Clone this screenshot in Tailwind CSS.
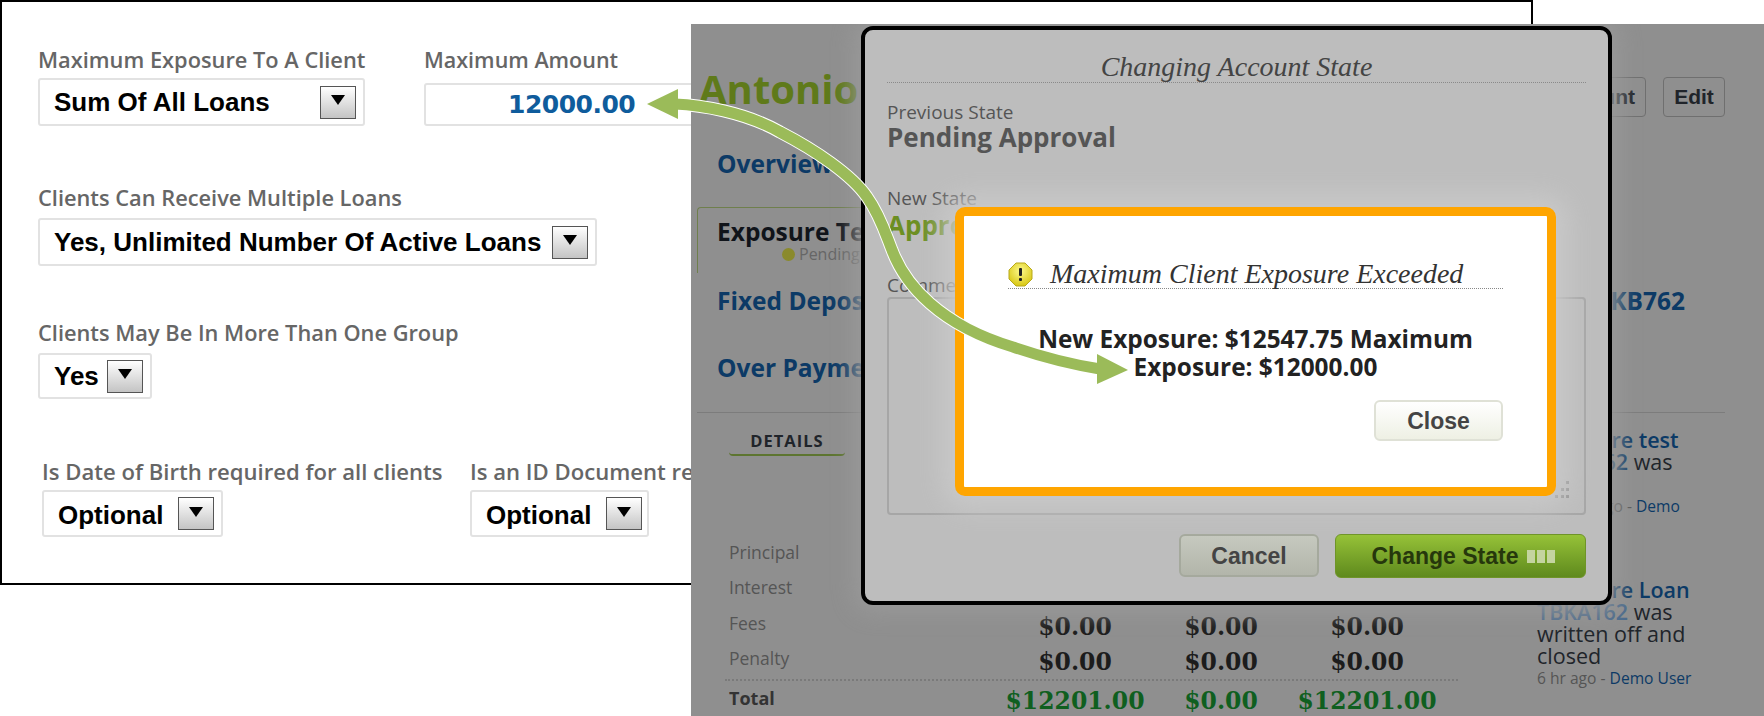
<!DOCTYPE html>
<html lang="en">
<head>
<meta charset="UTF-8">
<title>Maximum Client Exposure</title>
<script src="https://cdn.jsdelivr.net/npm/@tailwindcss/browser@4"></script>
</head>
<body class="bg-white overflow-hidden font-['Open_Sans',sans-serif]">
<div class="relative w-[1764px] h-[716px] overflow-hidden">

  <!-- settings window, left -->
  <div class="absolute left-0 top-0 w-[1533px] h-[585px] border-2 border-black bg-white pl-[36px] pt-[46px]">
    <div class="flex items-end gap-[59px]">
      <div class="w-[327px]">
        <div class="h-[24px] leading-[24px] text-[21.8px] font-semibold text-[#666] whitespace-nowrap">Maximum Exposure To A Client</div>
        <div class="mt-[6px] h-[48px] border-2 border-[#e2e2e2] rounded-[3px] flex items-center justify-between pl-[14px] pr-[7px]">
          <span class="font-['Liberation_Sans',sans-serif] font-bold text-[26px] text-black">Sum Of All Loans</span>
          <span class="w-[36px] h-[33px] border border-[#555] bg-gradient-to-b from-white to-[#c4c4c4] flex items-center justify-center"><svg width="14" height="10" viewBox="0 0 14 10" class="mb-[4px]"><path d="M0 0h14L7 10z" fill="#000"/></svg></span>
        </div>
      </div>
      <div class="w-[300px]">
        <div class="h-[24px] leading-[24px] text-[21.5px] font-semibold text-[#666] whitespace-nowrap">Maximum Amount</div>
        <div class="mt-[11px] h-[43px] border-2 border-[#e2e2e2] rounded-[3px] flex items-center pl-[82px]">
          <span class="font-['DejaVu_Sans',sans-serif] font-bold text-[25px] tracking-[-0.5px] text-[#0f5c9c] pt-[1px]">12000.00</span>
        </div>
      </div>
    </div>

    <div class="mt-[60px] h-[24px] leading-[24px] text-[21.8px] font-semibold text-[#666]">Clients Can Receive Multiple Loans</div>
    <div class="mt-[8px] w-[559px] h-[48px] border-2 border-[#e2e2e2] rounded-[3px] flex items-center justify-between pl-[14px] pr-[7px]">
      <span class="font-['Liberation_Sans',sans-serif] font-bold text-[26px] text-black">Yes, Unlimited Number Of Active Loans</span>
      <span class="w-[36px] h-[33px] border border-[#555] bg-gradient-to-b from-white to-[#c4c4c4] flex items-center justify-center"><svg width="14" height="10" viewBox="0 0 14 10" class="mb-[4px]"><path d="M0 0h14L7 10z" fill="#000"/></svg></span>
    </div>

    <div class="mt-[55px] h-[24px] leading-[24px] text-[21.8px] font-semibold text-[#666]">Clients May Be In More Than One Group</div>
    <div class="mt-[8px] w-[114px] h-[46px] border-2 border-[#e2e2e2] rounded-[3px] flex items-center justify-between pl-[14px] pr-[7px]">
      <span class="font-['Liberation_Sans',sans-serif] font-bold text-[26px] text-black pt-[1px]">Yes</span>
      <span class="w-[36px] h-[33px] border border-[#555] bg-gradient-to-b from-white to-[#c4c4c4] flex items-center justify-center"><svg width="14" height="10" viewBox="0 0 14 10" class="mb-[4px]"><path d="M0 0h14L7 10z" fill="#000"/></svg></span>
    </div>

    <div class="mt-[60px] flex gap-[27px] pl-[4px]">
      <div class="w-[401px]">
        <div class="h-[24px] leading-[24px] text-[22.1px] font-semibold text-[#666] whitespace-nowrap">Is Date of Birth required for all clients</div>
        <div class="mt-[7px] w-[181px] h-[47px] border-2 border-[#e2e2e2] rounded-[3px] flex items-center justify-between pl-[14px] pr-[7px]">
          <span class="font-['Liberation_Sans',sans-serif] font-bold text-[26px] text-black pt-[3px]">Optional</span>
          <span class="w-[36px] h-[33px] border border-[#555] bg-gradient-to-b from-white to-[#c4c4c4] flex items-center justify-center"><svg width="14" height="10" viewBox="0 0 14 10" class="mb-[4px]"><path d="M0 0h14L7 10z" fill="#000"/></svg></span>
        </div>
      </div>
      <div class="w-[401px]">
        <div class="h-[24px] leading-[24px] text-[22.1px] font-semibold text-[#666] whitespace-nowrap">Is an ID Document required for all clients</div>
        <div class="mt-[7px] w-[179px] h-[47px] border-2 border-[#e2e2e2] rounded-[3px] flex items-center justify-between pl-[14px] pr-[5px]">
          <span class="font-['Liberation_Sans',sans-serif] font-bold text-[26px] text-black pt-[3px]">Optional</span>
          <span class="w-[36px] h-[33px] border border-[#555] bg-gradient-to-b from-white to-[#c4c4c4] flex items-center justify-center"><svg width="14" height="10" viewBox="0 0 14 10" class="mb-[4px]"><path d="M0 0h14L7 10z" fill="#000"/></svg></span>
        </div>
      </div>
    </div>
  </div>

  <!-- dimmed account page, right -->
  <div class="absolute left-[691px] top-[24px] w-[1073px] h-[692px] bg-[#8f8f8f] overflow-hidden">
    <div class="flex justify-between items-start pl-[8px] pr-[39px] pt-[38px] h-[125px]">
      <div class="text-[40px] leading-[54px] font-bold text-[#5f7a1a]">Antonio Ferreira</div>
      <div class="flex gap-[17px] pt-[15px]">
        <div class="h-[40px] pl-[14px] pr-[10px] border border-[#6f6f6f] rounded-[4px] leading-[38px] font-['Liberation_Sans',sans-serif] font-bold text-[21px] text-[#20242a]">Account</div>
        <div class="w-[62px] h-[40px] border border-[#6f6f6f] rounded-[4px] text-center leading-[38px] font-['Liberation_Sans',sans-serif] font-bold text-[21px] text-[#20242a]">Edit</div>
      </div>
    </div>
    <div class="pl-[26px] h-[30px] leading-[30px] text-[24.5px] font-bold text-[#0c3a66]">Overview</div>
    <div class="ml-[6px] mt-[28px] w-[300px] h-[66px] border-l border-t border-[#6f7f4d] rounded-tl-[4px] pl-[19px] pt-[9px]">
      <div class="leading-[30px] text-[24.5px] font-bold text-[#10141a]">Exposure Test</div>
      <div class="flex items-center justify-start gap-[4px] pl-[65px] -mt-[3px] leading-[20px] text-[16px] text-[#666]"><span class="w-[13px] h-[13px] rounded-full bg-[#8a8a2c]"></span>Pending</div>
    </div>
    <div class="mt-[13px] pl-[26px] pr-[79px] h-[30px] leading-[30px] text-[24.5px] font-bold text-[#0c3a66] flex justify-between"><span>Fixed Deposit</span><span>TBKB762</span></div>
    <div class="mt-[37px] pl-[26px] h-[30px] leading-[30px] text-[24.5px] font-bold text-[#0c3a66]">Over Payment</div>
    <div class="mt-[29px] ml-[6px] mr-[39px] h-[1px] bg-[#7c7c7c]"></div>

    <div class="flex">
      <div class="w-[846px] pl-[34px]">
        <div class="mt-[19px] ml-[4px] w-[116px] h-[24px] border-b-2 border-[#5d7530] rounded-b-[4px] text-center text-[16.5px] leading-[18px] font-bold tracking-[1px] text-[#20242a]">DETAILS</div>
        <div class="mt-[79px] grid grid-cols-[273px_146px_146px_146px] pl-[4px] text-center font-['DejaVu_Serif',serif] font-bold text-[23.5px] text-[#1c1c1c]">
          <div class="h-[34px] leading-[34px] text-left font-['Open_Sans',sans-serif] font-normal text-[17.5px] text-[#555]">Principal</div><div class="h-[34px] leading-[42px]">$12201.00</div><div class="h-[34px] leading-[42px]">$0.00</div><div class="h-[34px] leading-[42px]">$12201.00</div>
          <div class="h-[36px] leading-[36px] text-left font-['Open_Sans',sans-serif] font-normal text-[17.5px] text-[#555]">Interest</div><div class="h-[36px] leading-[44px]">$0.00</div><div class="h-[36px] leading-[44px]">$0.00</div><div class="h-[36px] leading-[44px]">$0.00</div>
          <div class="h-[36px] leading-[36px] text-left font-['Open_Sans',sans-serif] font-normal text-[17.5px] text-[#555]">Fees</div><div class="h-[36px] leading-[44px]">$0.00</div><div class="h-[36px] leading-[44px]">$0.00</div><div class="h-[36px] leading-[44px]">$0.00</div>
          <div class="h-[34px] leading-[34px] text-left font-['Open_Sans',sans-serif] font-normal text-[17.5px] text-[#555]">Penalty</div><div class="h-[34px] leading-[42px]">$0.00</div><div class="h-[34px] leading-[42px]">$0.00</div><div class="h-[34px] leading-[42px]">$0.00</div>
        </div>
        <div class="w-[733px] border-t-2 border-dotted border-[#7a7a7a] mt-[4px]"></div>
        <div class="grid grid-cols-[273px_146px_146px_146px] pl-[4px] text-center font-['DejaVu_Serif',serif] font-bold text-[23.5px] text-[#0f5f1f]">
          <div class="h-[36px] leading-[34px] text-left font-['Open_Sans',sans-serif] text-[18px] text-[#333]">Total</div><div class="leading-[40px]">$12201.00</div><div class="leading-[40px]">$0.00</div><div class="leading-[40px]">$12201.00</div>
        </div>
      </div>
      <div class="flex-1 pt-[16px] text-[21.5px] leading-[22px] font-medium text-[#20242a] whitespace-nowrap">
        <div class="h-[110px]"><div class="font-semibold text-[#0c3a66]">Exposure test</div><div><span class="font-semibold text-[#0c3a66]">TBKB762</span> was</div><div>closed</div><div class="text-[15.6px] font-normal text-[#555]">14 days ago - <span class="text-[#0c3a66]">Demo</span></div></div>
        <div class="mt-[40px]"><div class="font-semibold text-[#0c3a66]">Exposure Loan</div><div><span class="font-semibold text-[#4a6a8c]">TBKA162</span> was</div><div>written off and</div><div>closed</div><div class="text-[15.6px] font-normal text-[#555]">6 hr ago - <span class="text-[#0c3a66]">Demo User</span></div></div>
      </div>
    </div>

    <!-- change state dialog -->
    <div class="absolute left-[170px] top-[2px] w-[751px] h-[579px] border-4 border-black rounded-[12px] bg-[#bdbdbd] shadow-[0_0_22px_7px_#999] px-[22px] pt-[22px]">
      <div class="h-[30px] leading-[29px] text-center font-['Liberation_Serif',serif] italic text-[28px] text-[#444]">Changing Account State</div>
      <div class="border-t border-dotted border-[#8a8a8a]"></div>
      <div class="mt-[17px] leading-[24px] text-[19px] text-[#555]">Previous State</div>
      <div class="-mt-[2px] leading-[30px] text-[26px] font-bold text-[#555]">Pending Approval</div>
      <div class="mt-[34px] leading-[24px] text-[19px] text-[#555]">New State</div>
      <div class="leading-[30px] text-[26px] font-bold text-[#6c8f22]">Approved</div>
      <div class="mt-[34px] leading-[22px] text-[19px] text-[#555]">Comments</div>
      <div class="relative mt-[1px] h-[218px] border-2 border-[#a6a6a6] rounded-[4px]">
        <svg class="absolute right-[14px] bottom-[14px]" width="16" height="18" viewBox="0 0 16 18" fill="#8c8c8c"><rect x="12" y="0" width="3" height="3"/><rect x="7" y="7" width="3" height="3"/><rect x="12" y="7" width="3" height="3"/><rect x="1" y="14" width="3" height="3"/><rect x="7" y="14" width="3" height="3"/><rect x="12" y="14" width="3" height="3"/></svg>
      </div>
      <div class="mt-[19px] flex justify-end gap-[16px] font-['Liberation_Sans',sans-serif] font-bold text-[23px]">
        <div class="w-[140px] h-[43px] border-2 border-[#a5a99d] rounded-[6px] bg-gradient-to-b from-[#c6c9bf] to-[#b2b5aa] text-center leading-[40px] text-[#444]">Cancel</div>
        <div class="w-[251px] h-[44px] rounded-[6px] border border-[#6f9428] bg-gradient-to-b from-[#96c238] to-[#5f8a1d] flex items-center justify-center gap-[9px] pl-[6px] text-[#26370c]">Change State
          <span class="flex gap-[2px]"><span class="w-[8px] h-[13px] bg-[#c4d4a0]"></span><span class="w-[8px] h-[13px] bg-[#c4d4a0]"></span><span class="w-[8px] h-[13px] bg-[#c4d4a0]"></span></span>
        </div>
      </div>
    </div>
  </div>

  <!-- exposure alert -->
  <div class="absolute left-[955px] top-[207px] w-[601px] h-[289px] border-[9px] border-[#ffa500] rounded-[10px] bg-white shadow-[0_0_26px_12px_#c9c9c9] pt-[44px]">
    <div class="mx-[44px] h-[29px] flex items-center gap-[17px] border-b border-dotted border-[#888]">
      <svg width="25" height="25" viewBox="0 0 25 25"><defs><radialGradient id="warn" cx="50%" cy="35%" r="65%"><stop offset="0" stop-color="#fdf98c"/><stop offset="1" stop-color="#d8c714"/></radialGradient></defs><path d="M8 1h9l7 7v9l-7 7H8l-7-7V8z" fill="url(#warn)" stroke="#b8a91a"/><rect x="11" y="6" width="3" height="8" rx="1" fill="#222"/><rect x="11" y="16" width="3" height="3" rx="1" fill="#222"/></svg>
      <span class="font-['Liberation_Serif',serif] italic text-[28px] text-[#333] whitespace-nowrap">Maximum Client Exposure Exceeded</span>
    </div>
    <div class="mt-[36px] mx-auto w-[460px] text-center text-[24.4px] leading-[28px] font-bold text-[#222]">New Exposure: $12547.75 Maximum Exposure: $12000.00</div>
    <div class="mt-[19px] mx-[44px] flex justify-end">
      <div class="w-[129px] h-[41px] border-2 border-[#dfe1d6] rounded-[6px] bg-gradient-to-b from-white to-[#eef0e4] text-center leading-[39px] font-['Liberation_Sans',sans-serif] font-bold text-[23px] text-[#444]">Close</div>
    </div>
  </div>

  <!-- callout arrow -->
  <svg class="absolute left-0 top-0 pointer-events-none" width="1764" height="716" viewBox="0 0 1764 716" fill="none">
    <path d="M675 104C700 105 745 112 780 132C815 150 852 175 867 197C880 215 886 235 892 250C905 285 940 325 1013 347C1045 358 1075 365 1100 369" stroke="#fff" stroke-width="13"/>
    <path d="M675 104C700 105 745 112 780 132C815 150 852 175 867 197C880 215 886 235 892 250C905 285 940 325 1013 347C1045 358 1075 365 1100 369" stroke="#9bbb59" stroke-width="11"/>
    <path d="M647 104L678 89V119z" fill="#9bbb59"/>
    <path d="M1128 370L1097 354V384z" fill="#9bbb59"/>
  </svg>
</div>
</body>
</html>
